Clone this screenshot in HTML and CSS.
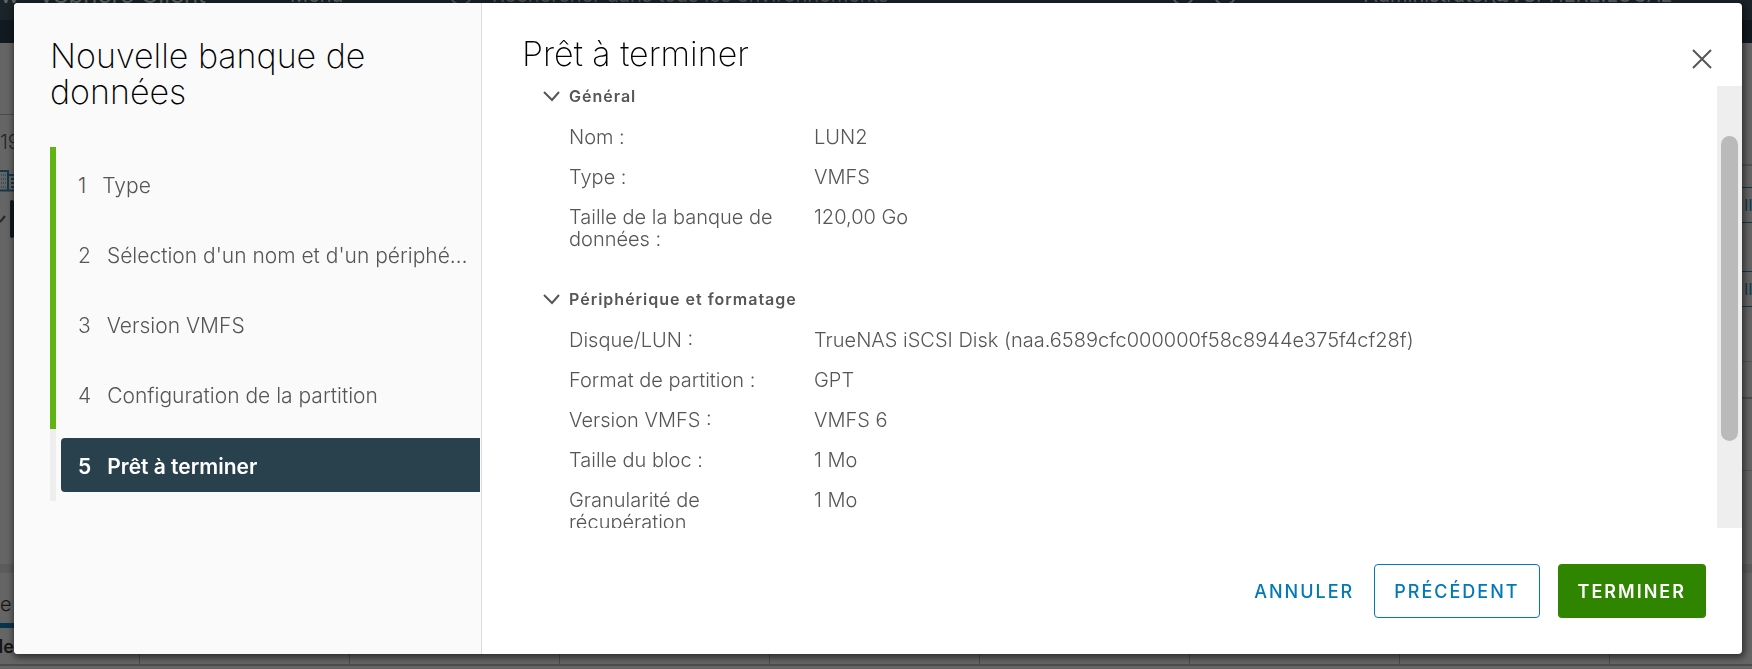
FILE: index.html
```html
<!DOCTYPE html>
<html lang="fr">
<head>
<meta charset="utf-8">
<title>Nouvelle banque de données</title>
<link rel="stylesheet" href="styles.css">
</head>
<body>
<div class="app" aria-hidden="true">
  <div class="app-header">
    <div class="app-left"><span>w</span><span class="brand">vSphere Client</span></div>
    <div class="app-mid"><span>Menu</span><svg width="14" height="9" viewBox="0 0 14 9"><path d="M1 1l6 6 6-6"/></svg></div>
    <div class="app-search"><svg width="22" height="22" viewBox="0 0 22 22"><circle cx="11" cy="11" r="10"/></svg><span>Rechercher dans tous les environnements</span></div>
    <div class="app-right"><svg width="22" height="22" viewBox="0 0 22 22"><circle cx="11" cy="11" r="10"/></svg><svg width="22" height="22" viewBox="0 0 22 22"><circle cx="11" cy="11" r="10"/></svg><span class="user">Administrator@VSPHERE.LOCAL</span></div>
  </div>
  <div class="app-subbar"></div>
  <div class="app-body">
    <div class="tree">
      <div class="tree-top"></div>
      <div class="tree-ip">19</div>
      <svg class="tree-icon" width="16" height="22" viewBox="0 0 16 22"><path d="M0 1h8v20M8 5h8M0 20.500h16M11 9h5M11 13h5M11 17h5" /><path class="dots" d="M1 5h6M1 9h6M1 13h6M1 17h6"/></svg>
      <div class="tree-row"><svg width="6" height="10" viewBox="0 0 6 10"><path d="M0 8l5-6"/></svg><i></i></div>
    </div>
    <div class="side">
      <div class="side-a"></div><div class="side-btn">II</div><div class="side-btn">II</div><div class="side-b"></div><div class="side-c"></div><div class="side-d"></div>
    </div>
  </div>
  <div class="tasks">
    <div class="tabs"><span>e</span></div>
    <div class="cols"><b>de</b><i></i><i></i><i></i><i></i><i></i><i></i><i></i><i></i></div>
  </div>
</div>

<div class="backdrop">
  <div class="modal" role="dialog" aria-modal="true" aria-labelledby="wizard-title">
    <nav class="wizard-nav">
      <h1 id="wizard-title" class="title">Nouvelle banque de données</h1>
      <ol class="steps">
        <li class="step done"><button type="button"><span class="num">1</span><span class="label">Type</span></button></li>
        <li class="step done"><button type="button"><span class="num">2</span><span class="label">Sélection d'un nom et d'un périphérique</span></button></li>
        <li class="step done"><button type="button"><span class="num">3</span><span class="label">Version VMFS</span></button></li>
        <li class="step done"><button type="button"><span class="num">4</span><span class="label">Configuration de la partition</span></button></li>
        <li class="step current"><button type="button" aria-current="step"><span class="num">5</span><span class="label">Prêt à terminer</span></button></li>
      </ol>
    </nav>
    <section class="page">
      <header class="page-head">
        <h2 class="title">Prêt à terminer</h2>
        <button type="button" class="close" aria-label="Fermer"><svg width="22" height="22" viewBox="0 0 22 22"><path d="M2 2l18 18M20 2L2 20"/></svg></button>
      </header>
      <div class="scroll-area">
        <div class="content">
          <section class="group">
            <button type="button" class="group-head" aria-expanded="true"><svg width="18" height="12" viewBox="0 0 18 12"><path d="M2 2l8 8 7-8"/></svg><span>Général</span></button>
            <dl>
              <dt>Nom :</dt><dd>LUN2</dd>
              <dt>Type :</dt><dd>VMFS</dd>
              <dt>Taille de la banque de données :</dt><dd>120,00 Go</dd>
            </dl>
          </section>
          <section class="group">
            <button type="button" class="group-head" aria-expanded="true"><svg width="18" height="12" viewBox="0 0 18 12"><path d="M2 2l8 8 7-8"/></svg><span>Périphérique et formatage</span></button>
            <dl>
              <dt>Disque/LUN :</dt><dd>TrueNAS iSCSI Disk (naa.6589cfc000000f58c8944e375f4cf28f)</dd>
              <dt>Format de partition :</dt><dd>GPT</dd>
              <dt>Version VMFS :</dt><dd>VMFS 6</dd>
              <dt>Taille du bloc :</dt><dd>1 Mo</dd>
              <dt>Granularité de récupération</dt><dd>1 Mo</dd>
            </dl>
          </section>
        </div>
        <div class="scrollbar"><div class="thumb"></div></div>
      </div>
      <footer class="actions">
        <button type="button" class="btn link">ANNULER</button>
        <button type="button" class="btn outline">PRÉCÉDENT</button>
        <button type="button" class="btn primary">TERMINER</button>
      </footer>
    </section>
  </div>
</div>
</body>
</html>
```
FILE: styles.css
```css
* { box-sizing: border-box; }

body {
  margin: 0;
  height: 100vh;
  overflow: hidden;
  background: #656565;
  color: #565656;
  font: 300 20px/22px Inter, "Liberation Sans", sans-serif;
}

button {
  margin: 0;
  padding: 0;
  border: 0;
  background: none;
  color: inherit;
  font: inherit;
  text-align: left;
  cursor: pointer;
}

svg {
  flex: none;
  fill: none;
  stroke: currentColor;
  stroke-width: 2;
}

h1, h2, ol, dl, dd { margin: 0; padding: 0; }

/* Dimmed application behind the dialog */
.app {
  display: flex;
  flex-direction: column;
  height: 100vh;
  overflow: hidden;
}

.app-header {
  flex: none;
  display: grid;
  grid-template-columns: 290px 160px 1fr 580px;
  align-items: start;
  height: 20px;
  overflow: hidden;
  background: #1b2429;
  color: #62676b;
  white-space: nowrap;
}

.app-header > div {
  display: flex;
  align-items: center;
  gap: 20px;
  height: 24px;
  margin-top: -17px;
  font-weight: 400;
}

.app-left { font-size: 24px; }
.app-search { color: #50565a; }
.app-right .user { margin-left: 108px; }

.app-subbar { flex: none; height: 23px; background: #121a21; }

.app-body {
  flex: 1;
  display: flex;
  justify-content: space-between;
  border-bottom: 9px solid #5c5c5c;
}

.tree { width: 14px; overflow: hidden; color: #262626; }
.tree-top { height: 72px; border-bottom: 1px solid #4c4c4c; }
.tree-ip { padding: 16px 0 17px; }
.tree-icon { display: block; color: #15384a; }
.tree-icon .dots { stroke-width: 1; stroke-dasharray: 1 1; }
.tree-row { display: flex; align-items: center; gap: 4px; margin-top: 8px; }
.tree-row i { width: 8px; height: 38px; border-radius: 4px; background: #10191f; }

.side { width: 10px; overflow: hidden; }
.side-a { height: 123px; margin-bottom: 21px; border-bottom: 2px solid #535353; }
.side-btn {
  height: 36px;
  margin-bottom: 48px;
  padding: 6px 2px;
  border: 1px solid #123a50;
  border-width: 1px 0;
  color: #123a50;
  font-size: 16px;
  font-weight: 400;
}
.side-b { height: 7px; border-bottom: 1px solid #555; }
.side-c { height: 37px; border-bottom: 2px solid #4c4c4c; }
.side-d { height: 72px; border-bottom: 1px solid #555; }

.tasks { flex: none; height: 96px; overflow: hidden; color: #161616; }
.tabs { height: 55px; padding-top: 20px; border-bottom: 5px solid #09344d; width: 40px; }
.cols {
  display: grid;
  grid-template-columns: 139px;
  grid-auto-columns: 210px;
  grid-auto-flow: column;
  height: 38px;
  border-bottom: 2px solid #4c4c4c;
}
.cols b { padding-top: 8px; font-size: 18px; font-weight: 600; text-indent: -8px; }
.cols i { border-left: 1px solid #4c4c4c; }

/* Dialog */
.backdrop {
  position: fixed;
  inset: 0;
  display: flex;
  padding: 3px 10px 15px 14px;
}

.modal {
  flex: 1;
  display: grid;
  grid-template-columns: 468px minmax(0, 1fr);
  overflow: hidden;
  border-radius: 4px;
  background: #fff;
  box-shadow: 1px 2px 6px 2px rgba(0, 0, 0, 0.5);
}

.title {
  color: #000;
  font-size: 34px;
  font-weight: 200;
  line-height: 36px;
}

.wizard-nav {
  padding: 35px 1px 0 36px;
  border-right: 1px solid #ddd;
  background: #fafafa;
}

.wizard-nav .title { padding-right: 60px; }

.steps { margin-top: 37px; list-style: none; font-size: 21px; }

.step {
  padding: 9px 0 9px 5px;
  border-left: 6px solid #eee;
}

.step.done { padding-bottom: 7px; border-left-color: #60b515; }
.step:first-child { padding-top: 11px; }

.step button {
  display: flex;
  gap: 16px;
  align-items: center;
  width: 100%;
  height: 54px;
  padding: 2px 8px 0 17px;
  border-radius: 4px 0 0 4px;
}

.label {
  overflow: hidden;
  text-overflow: ellipsis;
  white-space: nowrap;
  line-height: 28px;
}

.step.current button { padding-top: 4px; background: #29404d; color: #fff; font-weight: 600; }

.page { display: flex; flex-direction: column; min-height: 0; }

.page-head {
  display: flex;
  justify-content: space-between;
  padding: 33px 29px 0 40px;
  height: 83px;
}

.close { display: flex; height: 22px; margin-top: 12px; }

.scroll-area { flex: 1; display: flex; min-height: 0; overflow: hidden; }

.content { flex: 1; padding: 0 20px 0 60px; overflow: hidden; }

.group { margin-bottom: 39px; }

.group-head {
  display: flex;
  align-items: center;
  gap: 9px;
  height: 20px;
  font-size: 16px;
  font-weight: 600;
  letter-spacing: 1px;
}

dl {
  display: grid;
  grid-template-columns: 215px minmax(0, 1fr);
  gap: 18px 30px;
  padding: 20px 0 0 27px;
}

.scrollbar { width: 25px; padding: 50px 4px 0; background: #eee; }
.thumb { height: 305px; border-radius: 9px; background: #bababa; }

.actions {
  display: flex;
  justify-content: flex-end;
  gap: 18px;
  padding: 36px 36px 36px 0;
}

.btn {
  height: 54px;
  padding: 2px 19px 0;
  border: 1px solid transparent;
  border-radius: 4px;
  color: #0079b8;
  font-size: 18px;
  font-weight: 500;
  letter-spacing: 2px;
}

.btn.link { padding: 2px 1px 0; }
.btn.outline { border-color: #0079b8; }
.btn.primary { background: #2f8400; color: #fff; font-weight: 600; }
```
